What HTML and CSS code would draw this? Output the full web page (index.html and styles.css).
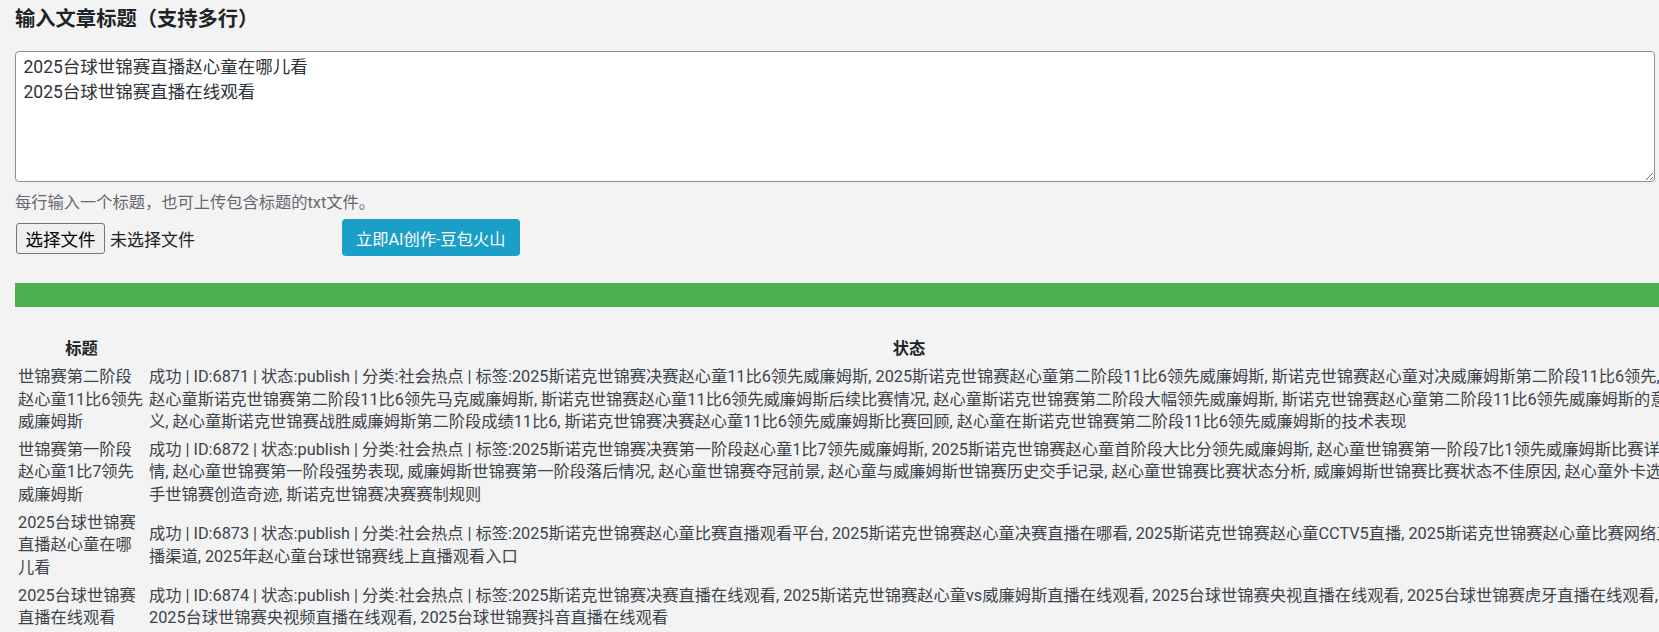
FILE: index.html
```html
<!DOCTYPE html>
<html lang="zh-CN">
<head>
<meta charset="utf-8">
<title>AI创作</title>
<link rel="stylesheet" href="styles.css">
</head>
<body>
<div class="wrap">
  <h2 class="title">输入文章标题（支持多行）</h2>
  <textarea class="titles" rows="5">2025台球世锦赛直播赵心童在哪儿看
2025台球世锦赛直播在线观看</textarea>
  <p class="description">每行输入一个标题，也可上传包含标题的txt文件。</p>
  <div class="actions">
    <div class="file-picker"><span class="file-btn">选择文件</span><span class="file-name">未选择文件</span></div>
    <button class="primary" type="button">立即AI创作-豆包火山</button>
  </div>
  <div class="progress"></div>
  <table class="results">
    <thead>
      <tr><th class="col-title">标题</th><th>状态</th></tr>
    </thead>
    <tbody>
      <tr>
        <td class="name">世锦赛第二阶段<br>赵心童11比6领先<br>威廉姆斯</td>
        <td class="status">成功 | ID:6871 | 状态:publish | 分类:社会热点 | 标签:2025斯诺克世锦赛决赛赵心童11比6领先威廉姆斯, 2025斯诺克世锦赛赵心童第二阶段11比6领先威廉姆斯, 斯诺克世锦赛赵心童对决威廉姆斯第二阶段11比6领先,<br>赵心童斯诺克世锦赛第二阶段11比6领先马克威廉姆斯, 斯诺克世锦赛赵心童11比6领先威廉姆斯后续比赛情况, 赵心童斯诺克世锦赛第二阶段大幅领先威廉姆斯, 斯诺克世锦赛赵心童第二阶段11比6领先威廉姆斯的意<br>义, 赵心童斯诺克世锦赛战胜威廉姆斯第二阶段成绩11比6, 斯诺克世锦赛决赛赵心童11比6领先威廉姆斯比赛回顾, 赵心童在斯诺克世锦赛第二阶段11比6领先威廉姆斯的技术表现</td>
      </tr>
      <tr>
        <td class="name">世锦赛第一阶段<br>赵心童1比7领先<br>威廉姆斯</td>
        <td class="status">成功 | ID:6872 | 状态:publish | 分类:社会热点 | 标签:2025斯诺克世锦赛决赛第一阶段赵心童1比7领先威廉姆斯, 2025斯诺克世锦赛赵心童首阶段大比分领先威廉姆斯, 赵心童世锦赛第一阶段7比1领先威廉姆斯比赛详<br>情, 赵心童世锦赛第一阶段强势表现, 威廉姆斯世锦赛第一阶段落后情况, 赵心童世锦赛夺冠前景, 赵心童与威廉姆斯世锦赛历史交手记录, 赵心童世锦赛比赛状态分析, 威廉姆斯世锦赛比赛状态不佳原因, 赵心童外卡选<br>手世锦赛创造奇迹, 斯诺克世锦赛决赛赛制规则</td>
      </tr>
      <tr>
        <td class="name">2025台球世锦赛<br>直播赵心童在哪<br>儿看</td>
        <td class="status">成功 | ID:6873 | 状态:publish | 分类:社会热点 | 标签:2025斯诺克世锦赛赵心童比赛直播观看平台, 2025斯诺克世锦赛赵心童决赛直播在哪看, 2025斯诺克世锦赛赵心童CCTV5直播, 2025斯诺克世锦赛赵心童比赛网络直<br>播渠道, 2025年赵心童台球世锦赛线上直播观看入口</td>
      </tr>
      <tr>
        <td class="name">2025台球世锦赛<br>直播在线观看</td>
        <td class="status">成功 | ID:6874 | 状态:publish | 分类:社会热点 | 标签:2025斯诺克世锦赛决赛直播在线观看, 2025斯诺克世锦赛赵心童vs威廉姆斯直播在线观看, 2025台球世锦赛央视直播在线观看, 2025台球世锦赛虎牙直播在线观看,<br>2025台球世锦赛央视频直播在线观看, 2025台球世锦赛抖音直播在线观看</td>
      </tr>
    </tbody>
  </table>
</div>
</body>
</html>
```

FILE: styles.css
```css
html,
body {
  margin: 0;
  overflow: hidden;
  background: #f3f3f3;
}

body {
  font-family: Roboto, "Noto Sans CJK SC", sans-serif;
  font-size: 16.25px;
  color: #3c434a;
}

.wrap {
  width: 1657px;
  padding-left: 15px;
}

.title {
  margin: 0;
  padding-top: 4px;
  font-size: 20.3px;
  line-height: 30px;
  font-weight: 700;
  color: #1d2327;
}

.titles {
  display: block;
  box-sizing: border-box;
  width: 1640px;
  height: 131px;
  margin: 17px 0 0;
  padding: 3px 7.5px;
  font-family: Roboto, "Noto Sans CJK SC", sans-serif;
  font-size: 17.5px;
  line-height: 24.5px;
  color: #2c3338;
  background: #fff;
  border: 1px solid #8c8f94;
  border-radius: 4px;
  resize: vertical;
}

.description {
  margin: 10px 0 0;
  font-size: 16.25px;
  line-height: 22px;
  color: #646970;
}

.actions {
  display: flex;
  align-items: flex-start;
  margin-top: 5px;
}

.file-picker {
  display: flex;
  align-items: center;
  width: 327px;
  height: 31px;
  margin-top: 4px;
}

.file-btn {
  display: flex;
  align-items: center;
  box-sizing: border-box;
  height: 31px;
  margin-left: 1px;
  padding: 0 8.5px;
  font-size: 17.5px;
  color: #000;
  background: #efefef;
  border: 1px solid #767676;
  border-radius: 3px;
}

.file-name {
  margin-left: 5px;
  font-size: 17px;
  color: #1d2327;
}

.primary {
  height: 37px;
  padding: 0 14px;
  font-family: Roboto, "Noto Sans CJK SC", sans-serif;
  font-size: 16.25px;
  color: #fff;
  background: #1a9fc9;
  border: 0;
  border-radius: 4px;
}

.progress {
  height: 24px;
  margin-top: 27px;
  background: #4caf50;
}

.results {
  width: 1657px;
  margin-top: 27px;
  table-layout: fixed;
  border-spacing: 2px;
}

.results th,
.results td {
  padding: 2px 1px;
  font-size: 16.25px;
  line-height: 22.3px;
}

.results th {
  font-weight: 700;
  color: #1d2327;
  text-align: center;
}

.results .col-title {
  width: 127px;
}

.results td.status {
  white-space: nowrap;
  overflow: hidden;
}
```
